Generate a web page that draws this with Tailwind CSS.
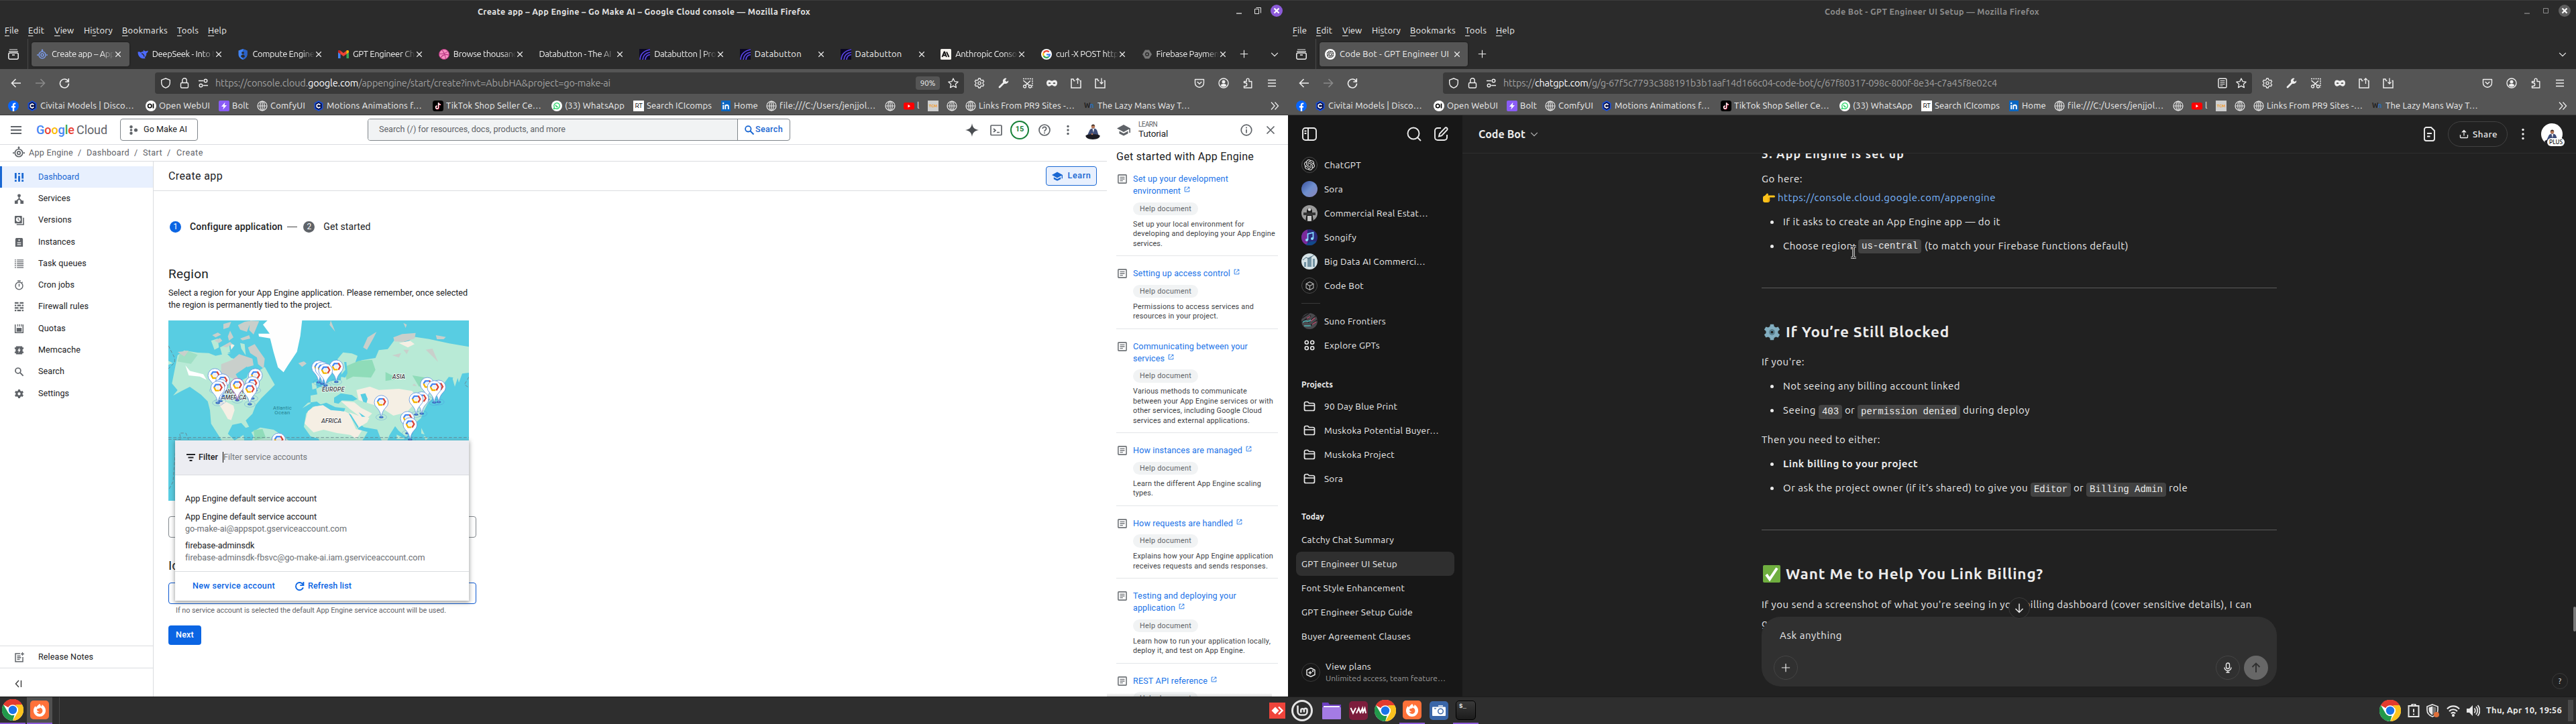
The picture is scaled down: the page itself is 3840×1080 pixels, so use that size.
<!DOCTYPE html>
<html lang="en">
<head>
<meta charset="utf-8">
<title>Desktop</title>
<script src="https://cdn.jsdelivr.net/npm/@tailwindcss/browser@4"></script>
</head>
<body class="w-[3840px] h-[1080px] overflow-hidden bg-[#2e2e2e] font-['Ubuntu','Open_Sans','Noto_Sans',sans-serif]">

<svg class="hidden">
  <defs>
    <symbol id="x" viewBox="0 0 16 16"><path d="M3 3l10 10M13 3L3 13" stroke="currentColor" stroke-width="1.6" fill="none"/></symbol>
    <symbol id="plus" viewBox="0 0 16 16"><path d="M8 1v14M1 8h14" stroke="currentColor" stroke-width="1.4" fill="none"/></symbol>
    <symbol id="chev" viewBox="0 0 16 16"><path d="M2.5 5.500l5.500 5.500 5.500-5.500" stroke="currentColor" stroke-width="1.4" fill="none"/></symbol>
    <symbol id="hist" viewBox="0 0 16 16"><path d="M2 1h12M1 3.800h14" stroke="currentColor" stroke-width="1.200"/><rect x=".8" y="6" width="14.400" height="9.300" rx="2" fill="none" stroke="currentColor" stroke-width="1.500"/><path d="M6 9h4" stroke="currentColor" stroke-width="1.500"/></symbol>
    <symbol id="back" viewBox="0 0 16 16"><path d="M15 8H1.500M7.500 2L1.500 8l6 6" stroke="currentColor" stroke-width="1.600" fill="none"/></symbol>
    <symbol id="fwd" viewBox="0 0 16 16"><path d="M1 8h13.500M8.500 2l6 6-6 6" stroke="currentColor" stroke-width="1.600" fill="none"/></symbol>
    <symbol id="reload" viewBox="0 0 16 16"><path d="M13.500 5A6.500 6.500 0 1 0 14.500 8.500M14.300 1v5H9.300" stroke="currentColor" stroke-width="1.600" fill="none"/></symbol>
    <symbol id="shield" viewBox="0 0 16 16"><path d="M8 1l6.300 2.400v4c0 4-3 6.500-6.300 7.800C4.700 13.900 1.700 11.400 1.700 7.400v-4z" stroke="currentColor" stroke-width="1.400" fill="none" stroke-linejoin="round"/></symbol>
    <symbol id="lock" viewBox="0 0 16 16"><rect x="2.500" y="7.500" width="11" height="7.500" rx="1.500" fill="none" stroke="currentColor" stroke-width="1.400"/><path d="M4.800 7.500V4a3.200 3.200 0 0 1 6.400 0v3.500" fill="none" stroke="currentColor" stroke-width="1.400"/></symbol>
    <symbol id="perm" viewBox="0 0 16 16"><path d="M1 4.500h7M15 11.500H8" stroke="currentColor" stroke-width="1.500"/><circle cx="11.500" cy="4.500" r="2.300" fill="none" stroke="currentColor" stroke-width="1.400"/><circle cx="4.500" cy="11.500" r="2.300" fill="none" stroke="currentColor" stroke-width="1.400"/></symbol>
    <symbol id="star" viewBox="0 0 16 16"><path d="M8 1l2.100 4.600 5 .6-3.700 3.400 1 5L8 12.100l-4.400 2.500 1-5L.9 6.200l5-.6z" fill="none" stroke="currentColor" stroke-width="1.300" stroke-linejoin="round"/></symbol>
    <symbol id="reader" viewBox="0 0 16 16"><rect x="2" y="1.200" width="12" height="13.600" rx="1.500" fill="none" stroke="currentColor" stroke-width="1.400"/><path d="M4.500 4.500h7M4.500 7h7M4.500 9.500h7M4.500 12h4" stroke="currentColor" stroke-width="1.200"/></symbol>
    <symbol id="gear" viewBox="0 0 16 16"><path d="M6.700 1h2.600l.5 2 1.600.9 2-.6 1.300 2.300-1.500 1.500v1.800l1.500 1.500-1.300 2.300-2-.6-1.600.9-.5 2H6.700l-.5-2-1.600-.9-2 .6L1.300 10.400l1.500-1.500V7.100L1.300 5.600l1.300-2.300 2 .6L6.200 3z" fill="none" stroke="currentColor" stroke-width="1.300" stroke-linejoin="round"/><circle cx="8" cy="8" r="2.100" fill="none" stroke="currentColor" stroke-width="1.300"/></symbol>
    <symbol id="wrench" viewBox="0 0 16 16"><path d="M2 14L9.500 6.500" stroke="currentColor" stroke-width="2.800" stroke-linecap="round"/><path d="M12.500.9A4.200 4.200 0 1 0 15.200 4.200L12.600 6 10.300 4z" fill="currentColor"/></symbol>
    <symbol id="snip" viewBox="0 0 16 16"><path d="M1 1.500h14v13" stroke="currentColor" stroke-width="1.500" fill="none" stroke-dasharray="2 1.300"/><path d="M1.500 4l9 7.500M12 4.500L4.500 11.500" stroke="currentColor" stroke-width="1.500"/><circle cx="3.500" cy="13" r="2" fill="none" stroke="currentColor" stroke-width="1.300"/><circle cx="11.500" cy="13" r="2" fill="none" stroke="currentColor" stroke-width="1.300"/></symbol>
    <symbol id="mask" viewBox="0 0 16 16"><path fill-rule="evenodd" fill="currentColor" d="M4 3.500c2 0 2.500 1.300 4 1.300s2-1.300 4-1.300c3 0 4 2 4 4.300 0 2.700-1.500 5-3.500 5S9.500 11 8 11s-2.500 1.800-4.500 1.800S0 10.500 0 7.800C0 5.500 1 3.500 4 3.500zM2.500 8.200C4 9.500 5.500 9.300 6.500 8.500 5.500 6.700 3.500 6.500 2.500 8.200zm7 .3c1 .8 2.500 1 4-.3-1-1.700-3-1.500-4 .3z"/></symbol>
    <symbol id="fup" viewBox="0 0 16 16"><path d="M6.500 4.500H5L4 2H1v13h14V4.500h-1.500" fill="none" stroke="currentColor" stroke-width="1.500"/><path d="M10.500 9V.8M8 3.500L10.500 1 13 3.500" fill="none" stroke="currentColor" stroke-width="1.300"/></symbol>
    <symbol id="fdn" viewBox="0 0 16 16"><path d="M6.500 4.500H5L4 2H1v13h14V4.500h-1.500" fill="none" stroke="currentColor" stroke-width="1.500"/><path d="M10 .5V9M7.500 6.500L10 9l2.500-2.500" fill="none" stroke="currentColor" stroke-width="1.300"/></symbol>
    <symbol id="pocket" viewBox="0 0 16 16"><path d="M1.500 2.500h13v5.200a6.500 6.500 0 0 1-13 0z" fill="none" stroke="currentColor" stroke-width="1.400" stroke-linejoin="round"/><path d="M4.800 6L8 9.200 11.200 6" fill="none" stroke="currentColor" stroke-width="1.500"/></symbol>
    <symbol id="acct" viewBox="0 0 16 16"><circle cx="8" cy="8" r="7" fill="none" stroke="currentColor" stroke-width="1.400"/><circle cx="8" cy="6" r="2.500" fill="currentColor"/><path d="M3.800 11.800c0-2 1.500-2.800 4.200-2.800s4.200.8 4.200 2.800C11 13.200 9.500 13.600 8 13.600s-3-.4-4.200-1.800z" fill="currentColor"/></symbol>
    <symbol id="ext" viewBox="0 0 16 16"><path d="M2.500 7.500V5.500H6.200V3a1.900 1.900 0 0 1 3.800 0v2.500h3.800V15H2.500v-2.500h1.700a2 2 0 0 0 0-5z" fill="none" stroke="currentColor" stroke-width="1.400" stroke-linejoin="round"/></symbol>
    <symbol id="menu" viewBox="0 0 16 16"><path d="M2 3.500h12M2 8h12M2 12.500h12" stroke="currentColor" stroke-width="1.400"/></symbol>
    <symbol id="globe" viewBox="0 0 16 16"><g fill="none" stroke="#e8e8e8" stroke-width="1.200"><circle cx="8" cy="8" r="7"/><ellipse cx="8" cy="8" rx="3.200" ry="7"/><path d="M1 8h14M8 1v14"/></g></symbol>
    <symbol id="fb" viewBox="0 0 16 16"><circle cx="8" cy="8" r="8" fill="#0866ff"/><path d="M6.800 16V10.500H4.900V8.200h1.900V7c0-2.500 1.200-3.500 3.200-3.500.6 0 1 0 1.300.1v2h-1c-.9 0-1.100.5-1.100 1.200v1.400h2l-.3 2.300H9.200V16z" fill="#fff"/></symbol>
    <symbol id="civ" viewBox="0 0 16 16"><path d="M8 0l6.500 3.800v8.400L8 16l-6.500-3.800V3.800z" fill="#1b4fd8"/><path d="M8 2l4.800 2.800v6.400L8 14l-4.800-2.800V4.800z" fill="#06104a"/><path d="M10.500 6.500L8 5 5.300 6.500v3L8 11l2.500-1.500" fill="none" stroke="#fff" stroke-width="1.700"/></symbol>
    <symbol id="oi" viewBox="0 0 16 16"><circle cx="8" cy="8" r="8" fill="#fff"/><circle cx="6.200" cy="8" r="2.700" fill="none" stroke="#000" stroke-width="1.600"/><path d="M11.500 4.500v7" stroke="#000" stroke-width="1.700"/></symbol>
    <symbol id="bolt" viewBox="0 0 16 16"><rect width="16" height="16" rx="2" fill="#8a5cf6"/><path d="M9.500 2.500L4 9h3.300l-1 4.500L12 7H8.700z" fill="#fff"/></symbol>
    <symbol id="tik" viewBox="0 0 16 16"><rect width="16" height="16" rx="3.500" fill="#000"/><path d="M8.500 3v7a2 2 0 1 1-2-2M8.500 3c.2 1.800 1.400 2.900 3.200 3" fill="none" stroke="#fe2c55" stroke-width="1.700" transform="translate(.5 .4)"/><path d="M8.500 3v7a2 2 0 1 1-2-2M8.500 3c.2 1.800 1.400 2.900 3.200 3" fill="none" stroke="#fff" stroke-width="1.400"/></symbol>
    <symbol id="wa" viewBox="0 0 16 16"><circle cx="8" cy="8" r="8" fill="#fff"/><path d="M3.500 12.500l.8-2.500A4.300 4.300 0 1 1 6 11.700z" fill="none" stroke="#25d366" stroke-width="1.300"/><path d="M6.300 6.300c.2 1.700 1.500 3 3.300 3.400" stroke="#25d366" stroke-width="1.400" fill="none"/></symbol>
    <symbol id="li" viewBox="0 0 16 16"><rect x="1" width="14" height="16" fill="#0a66c2"/><path d="M4.200 6.500V13M7.300 13V6.500M7.300 9c0-3 4.500-3 4.500 0v4" stroke="#fff" stroke-width="1.900" fill="none"/><circle cx="4.200" cy="3.900" r="1.200" fill="#fff"/></symbol>
    <symbol id="yt" viewBox="0 0 16 16"><rect y="3" width="16" height="10.500" rx="2.500" fill="#f00"/><path d="M6.500 6v4.400L10 8.200z" fill="#fff"/></symbol>
    <symbol id="gae" viewBox="0 0 16 16"><g fill="none" stroke="currentColor" stroke-width="1.500"><circle cx="8" cy="9" r="5"/><circle cx="8" cy="9" r="2"/><path d="M8 4V1M0 9h2.200M13.800 9H16"/></g><path d="M6.300 2.500h3.400L8 0z" fill="currentColor"/></symbol>
    <symbol id="deep" viewBox="0 0 16 16"><path d="M.5 4.500C2 4 3.500 4 5 5.500 6 4 7.500 3.500 8.700 4.300 8.300 3 9 2 9.700 1.600c.3 1.700 1.700 2 3 1.800L15.800 2.500c-.2 2-1 3.300-2.500 3.800.2 2.700-.8 5-2.600 6.200l1 1.500C6 15.500.5 12 .5 4.500z" fill="#4d6bfe"/><path d="M6 7c2 .2 3.500 2 4 4.500" stroke="#2b2b2b" stroke-width="1.300" fill="none"/></symbol>
    <symbol id="gshield" viewBox="0 0 16 16"><path d="M8 0l6.500 2.500V8c0 4-3 6.800-6.500 8C4.500 14.800 1.500 12 1.500 8V2.500z" fill="#4285f4"/><path d="M8 0l6.500 2.500V8c0 4-3 6.800-6.500 8z" fill="#2a62c9"/><circle cx="8" cy="5.800" r="1.900" fill="#2b2b2b"/><path d="M5 11.500c0-4 6-4 6 0L8 13.500z" fill="#2b2b2b"/></symbol>
    <symbol id="gmail" viewBox="0 0 16 16"><path d="M0 3.500V14h3.500V7z" fill="#4285f4"/><path d="M16 3.500V14h-3.500V7z" fill="#34a853"/><path d="M0 3.500C0 2 2 1.500 3 2.300L8 6l5-3.700c1-.8 3-.3 3 1.200L16 5 8 11 0 5z" fill="#ea4335"/><path d="M12.500 2.600l.5-.3c1-.8 3-.3 3 1.200V5l-3.500 2.600z" fill="#fbbc04"/><path d="M0 5V3.500C0 2 2 1.500 3 2.300l.5.4v4.900z" fill="#c5221f"/></symbol>
    <symbol id="drib" viewBox="0 0 16 16"><circle cx="8" cy="8" r="7.500" fill="#f48fc0" stroke="#b83280" stroke-width="1"/><path d="M5 1.500c3 3.500 4.500 8 5.500 13M1 7.500c6 0 10-1 12.500-4M3 13.500C5.500 8.500 10 7.500 15 9" fill="none" stroke="#b83280" stroke-width="1.100"/></symbol>
    <symbol id="db" viewBox="0 0 16 16"><rect width="16" height="16" fill="#0b0824"/><path d="M1 16C1.500 8 7 2.500 16 1M5 16c.5-6 4.500-10 11-11M9 16c.3-4 3-7 7-7.500" fill="none" stroke="#5b46e8" stroke-width="1.700"/></symbol>
    <symbol id="anth" viewBox="0 0 16 16"><rect width="16" height="16" rx="1.500" fill="#f5f3ee"/><path d="M2.500 12L5.500 4.500h.6L9 12M3.700 9.500h4M9 4.500L12.500 12" fill="none" stroke="#111" stroke-width="1.800"/></symbol>
    <symbol id="goog" viewBox="0 0 16 16"><circle cx="8" cy="8" r="8" fill="#fff"/><g fill="none" stroke-width="2.300"><path d="M11.700 4.600A4.900 4.900 0 0 0 3.700 5.700" stroke="#ea4335"/><path d="M3.700 5.700a4.900 4.900 0 0 0 0 4.700" stroke="#fbbc05"/><path d="M3.700 10.400a4.900 4.900 0 0 0 7.600 1.300" stroke="#34a853"/><path d="M11.300 11.700C12.300 10.800 12.900 9.500 12.900 8.300H8" stroke="#4285f4"/></g></symbol>
    <symbol id="hexg" viewBox="0 0 16 16"><path d="M5 1.500h6L15 8l-4 6.500H5L1 8z" fill="#777"/><circle cx="8" cy="8" r="3" fill="#2b2b2b"/><circle cx="8" cy="8" r="1.600" fill="#777"/></symbol>
    <symbol id="oai" viewBox="0 0 24 24"><path fill="currentColor" d="M22.2819 9.8211a5.9847 5.9847 0 0 0-.5157-4.9108 6.0462 6.0462 0 0 0-6.5098-2.9A6.0651 6.0651 0 0 0 4.9807 4.1818a5.9847 5.9847 0 0 0-3.9977 2.9 6.0462 6.0462 0 0 0 .7427 7.0966 5.98 5.98 0 0 0 .511 4.9107 6.051 6.051 0 0 0 6.5146 2.9001A5.9847 5.9847 0 0 0 13.2599 24a6.0557 6.0557 0 0 0 5.7718-4.2058 5.9894 5.9894 0 0 0 3.9977-2.9001 6.0557 6.0557 0 0 0-.7475-7.0729zm-9.022 12.6081a4.4755 4.4755 0 0 1-2.8764-1.0408l.1419-.0804 4.7783-2.7582a.7948.7948 0 0 0 .3927-.6813v-6.7369l2.02 1.1686a.071.071 0 0 1 .038.052v5.5826a4.504 4.504 0 0 1-4.4945 4.4944zm-9.6607-4.1254a4.4708 4.4708 0 0 1-.5346-3.0137l.142.0852 4.783 2.7582a.7712.7712 0 0 0 .7806 0l5.8428-3.3685v2.3324a.0804.0804 0 0 1-.0332.0615L9.74 19.9502a4.4992 4.4992 0 0 1-6.1408-1.6464zM2.3408 7.8956a4.485 4.485 0 0 1 2.3655-1.9728V11.6a.7664.7664 0 0 0 .3879.6765l5.8144 3.3543-2.0201 1.1685a.0757.0757 0 0 1-.071 0l-4.8303-2.7865A4.504 4.504 0 0 1 2.3408 7.872zm16.5963 3.8558L13.1038 8.364 15.1192 7.2a.0757.0757 0 0 1 .071 0l4.8303 2.7913a4.4944 4.4944 0 0 1-.6765 8.1042v-5.6772a.79.79 0 0 0-.407-.667zm2.0107-3.0231l-.142-.0852-4.7735-2.7818a.7759.7759 0 0 0-.7854 0L9.409 9.2297V6.8974a.0662.0662 0 0 1 .0284-.0615l4.8303-2.7866a4.4992 4.4992 0 0 1 6.6802 4.66zM8.3065 12.863l-2.02-1.1638a.0804.0804 0 0 1-.038-.0567V6.0742a4.4992 4.4992 0 0 1 7.3757-3.4537l-.142.0805L8.704 5.459a.7948.7948 0 0 0-.3927.6813zm1.0976-2.3654l2.602-1.4998 2.6069 1.4998v2.9994l-2.5974 1.4997-2.6067-1.4997Z"/></symbol>
    <symbol id="oaitab" viewBox="0 0 16 16"><circle cx="8" cy="8" r="8" fill="#fff"/><use href="#oai" x="2.500" y="2.500" width="11" height="11" color="#000"/></symbol>
    <!-- console navigation -->
    <symbol id="n-dash" viewBox="0 0 16 16"><g fill="currentColor"><path d="M1 1h3v9H1zM1 12h3v3H1zM6.500 1h3v2.500h-3zM6.500 5.500h3V15h-3zM12 1h3v9h-3zM12 12h3v3h-3z"/></g></symbol>
    <symbol id="n-serv" viewBox="0 0 16 16"><g fill="currentColor"><circle cx="8" cy="3" r="2.600"/><path d="M1 11h5v5H1zM10 11h5v5h-5z"/></g><path d="M8 4v4L3.500 12M8 8l4.500 4" stroke="currentColor" stroke-width="1.800" fill="none"/></symbol>
    <symbol id="n-vers" viewBox="0 0 16 16"><rect x="1" y="1" width="11.500" height="12" rx="1" fill="currentColor"/><path d="M4 15h11V4" stroke="currentColor" stroke-width="1.700" fill="none"/><circle cx="6.700" cy="7" r="3.700" fill="#fff"/><path d="M6.500 4.500V7l2 1.700" stroke="currentColor" stroke-width="1.200" fill="none"/></symbol>
    <symbol id="n-inst" viewBox="0 0 16 16"><path fill-rule="evenodd" fill="currentColor" d="M3 1h10l1 2v12H2V3zM7 3.500v2h2v-2zM5 8v1.300h6V8zm0 3v1.300h6V11z"/></symbol>
    <symbol id="n-task" viewBox="0 0 16 16"><path d="M1 2h2M4.500 2H15M1 5h2M4.500 5H15M1 8h2M4.500 8H15M1 11h2M4.500 11H15M1 14h2M4.500 14H15" stroke="currentColor" stroke-width="1.400"/></symbol>
    <symbol id="n-cron" viewBox="0 0 16 16"><circle cx="8" cy="9" r="5.800" fill="none" stroke="currentColor" stroke-width="1.500"/><path d="M5.500 1h5M8 5.500V10M12 4l1.500-1" stroke="currentColor" stroke-width="1.500"/></symbol>
    <symbol id="n-fire" viewBox="0 0 16 16"><path d="M1 2h6M9 2h6M1 6h2.500M5 6h6M12.500 6H15M1 10h6M9 10h6M1 14h2.500M5 14h6M12.500 14H15" stroke="currentColor" stroke-width="2.400"/></symbol>
    <symbol id="n-quot" viewBox="0 0 16 16"><path d="M1.800 1v13.200h12.400V1M5 1.500h1.500M8 1.500h1.500M11 1.500h1.500M5 3.500h1.500M8 3.500h1.500M11 3.500h1.500" stroke="currentColor" stroke-width="1.600" fill="none"/><path d="M4 6.500h8v6H4z" fill="currentColor"/></symbol>
    <symbol id="n-mem" viewBox="0 0 16 16"><path d="M3 1.500h10v2h2v2.500h-1.500v4H15v2.500h-2v2H3v-2H1V10h1.500V6H1V3.500h2z" fill="currentColor"/><path d="M9 3.500L5.500 8.800h2l-.6 3.700L10.500 7h-2z" fill="#fff"/></symbol>
    <symbol id="n-find" viewBox="0 0 16 16"><circle cx="6.300" cy="6.300" r="4.200" fill="none" stroke="currentColor" stroke-width="1.800"/><path d="M9.500 9.500L14.500 14.500" stroke="currentColor" stroke-width="2"/></symbol>
    <symbol id="n-set" viewBox="0 0 16 16"><path fill-rule="evenodd" fill="currentColor" d="M6.500 1h3l.4 2 1.500.9 2-.7 1.500 2.600-1.600 1.300v1.800l1.600 1.300-1.500 2.600-2-.7-1.500.9-.4 2h-3l-.4-2-1.500-.9-2 .7L1.100 10.200l1.600-1.300V7.100L1.100 5.800l1.500-2.600 2 .7L6.100 3zM8 5.700a2.300 2.300 0 1 0 0 4.600 2.300 2.300 0 0 0 0-4.600z"/></symbol>
    <symbol id="n-rel" viewBox="0 0 16 16"><path d="M9 3H2v12h11V8" fill="none" stroke="currentColor" stroke-width="1.500"/><path d="M4.500 6.500h5M4.500 9h6M4.500 11.500h4M12.500 1v5M10 3.500h5" stroke="currentColor" stroke-width="1.300"/></symbol>
    <symbol id="doc" viewBox="0 0 16 16"><rect x="1" y="1" width="14" height="14" rx="1" fill="none" stroke="currentColor" stroke-width="1.800"/><path d="M4 5h8M4 8h8M4 11h5" stroke="currentColor" stroke-width="1.600"/></symbol>
    <symbol id="pop" viewBox="0 0 12 12"><path d="M5 1.500H1.500v9h9V7M7 1.500h3.500V5M10.500 1.500L4.500 7.500" fill="none" stroke="currentColor" stroke-width="1.200"/></symbol>
    <symbol id="folder" viewBox="0 0 20 20"><path d="M2.500 5.500a2 2 0 0 1 2-2h3l2 2h6a2 2 0 0 1 2 2v7a2 2 0 0 1-2 2h-11a2 2 0 0 1-2-2zM2.500 9h15" fill="none" stroke="currentColor" stroke-width="1.700"/></symbol>
    <!-- taskbar -->
    <symbol id="chrome" viewBox="0 0 32 32"><circle cx="16" cy="16" r="16" fill="#fff"/><path d="M16 16L2.100 8A16 16 0 0 1 29.900 8z" fill="#e33b2e"/><path d="M16 0a16 16 0 0 1 13.900 8H16a8 8 0 0 0-6.900 4L2.100 8A16 16 0 0 1 16 0z" fill="#e33b2e"/><path d="M29.900 8A16 16 0 0 1 16 32l6.900-12a8 8 0 0 0 0-8L20 8z" fill="#fcc31e"/><path d="M2.100 8l7 12a8 8 0 0 0 9.500 3.500L16 32A16 16 0 0 1 2.100 8z" fill="#22994a"/><circle cx="16" cy="16" r="7.800" fill="#fff"/><circle cx="16" cy="16" r="6.200" fill="#1a73e8"/></symbol>
    <symbol id="ffox" viewBox="0 0 28 28"><rect width="28" height="28" rx="5" fill="#ff7139"/><path d="M14 5c1.500 1.500 2 3 2 4 1-.5 1.500-1.500 1.500-3C21.500 8.500 23.500 12 23 16c-.7 4.500-4.500 8-9 8s-8.500-3.500-9-8c-.3-3 .7-6 3-8 0 1 .3 1.700 1 2.200C10 8 12 7 14 5z" fill="#fff"/><path d="M10 13c2-1.500 4-.5 5-2.500 2.500 1 4 3 3.300 6-.7 2.500-3 3.700-5.200 3.300-2-.4-3.300-1.800-3.600-3.500 1 1 2.500 1.200 4 .2-2 0-3.500-1.500-3.500-3.500z" fill="#ff7139"/></symbol>
    <symbol id="face" viewBox="0 0 24 24"><circle cx="12.500" cy="5" r="2.700" fill="#b97a5a"/><path d="M9.800 4.500c0-4 5.500-4 5.500 0l-1-1h-3z" fill="#3a2a22"/><path d="M7 11c1-3 3-3.500 5.500-3.500S17.500 8 18.500 11l2 6.500-8 3-9-2z" fill="#3e4d78"/><path d="M11.500 8h2.500l-1 6z" fill="#fff"/><path d="M1.500 18c3-2.500 18-2.500 21 0 1 3-4 6-10.500 6S.5 21 1.500 18z" fill="#1b1b22"/><circle cx="11" cy="16" r="1.300" fill="#b97a5a"/></symbol>
    <!-- location marker, tip at 0,0 -->
    <symbol id="pin" viewBox="-40 -120 80 140" overflow="visible"><ellipse cx="0" cy="-4" rx="24" ry="13" fill="none" stroke="#4d8ad6" stroke-width="1.500" opacity=".7"/><ellipse cx="0" cy="-4" rx="10" ry="5" fill="#3c6fc0"/><path d="M0-2C-4-25-7-32-20-47a31 31 0 1 1 40 0C7-32 4-25 0-2z" fill="#fff" stroke="currentColor" stroke-width="2.500"/><path d="M-9-86L-17-73" stroke="#4285f4" stroke-width="7"/><path d="M-11-86H9" stroke="#4285f4" stroke-width="7"/><path d="M9-88L18-73 9-58" stroke="#db4437" stroke-width="7" fill="none"/><path d="M-17-74L-9-59H6" stroke="#f4b400" stroke-width="7" fill="none"/><circle cx="0" cy="-73" r="9" fill="#f1f1f1"/></symbol>
  </defs>
</svg>

<div class="flex flex-col w-[3840px] h-[1080px]">
  <div class="flex h-[1039px]">

    <!-- ============ Left browser window ============ -->
    <section class="w-[1920px] h-[1039px] flex flex-col overflow-hidden bg-white">
      <div data-chrome="left" class="shrink-0"></div>

      <div class="font-[Roboto] flex flex-col flex-1 min-h-0 text-[#202124]">
        <header class="h-[44px] shrink-0 border-b border-[#dadce0] flex items-center text-[#5f6368]">
          <svg class="w-4 h-4 ml-4"><path d="M0 3h16M0 8h16M0 13h16" stroke="#5f6368" stroke-width="2"/></svg>
          <div class="ml-[22px] w-[106px] flex items-baseline text-[18px] leading-none whitespace-nowrap">
            <span class="w-[60px]"><span data-w="57" class="inline-block font-medium"><span class="text-[#4285f4]">G</span><span class="text-[#ea4335]">o</span><span class="text-[#fbbc04]">o</span><span class="text-[#4285f4]">g</span><span class="text-[#34a853]">l</span><span class="text-[#ea4335]">e</span></span></span><span data-w="46">Cloud</span>
          </div>
          <div class="ml-[19px] w-[116px] h-[33px] rounded border border-[#80868b] flex items-center pl-3">
            <svg class="w-[14px] h-[14px]" viewBox="0 0 14 14" fill="#5f6368"><circle cx="3.500" cy="2.300" r="2.200"/><circle cx="3.500" cy="7" r="1.800"/><circle cx="3.500" cy="11.700" r="2.200"/><circle cx="10.500" cy="7" r="2.600"/></svg>
            <span data-w="65" class="ml-2 text-[12.6px] text-[#202124]">Go Make AI</span>
          </div>
          <div class="ml-[253px] w-[630px] h-[33px] rounded border border-[#80868b] flex overflow-hidden">
            <div class="w-[550px] bg-[#f1f3f4] flex items-center pl-4"><span data-w="278" class="text-[12.6px] text-[#5f6368]">Search (/) for resources, docs, products, and more</span></div>
            <div class="flex-1 border-l border-[#80868b] flex items-center pl-[9px] text-[#1a67d2]"><svg class="w-4 h-4"><use href="#n-find"/></svg><span data-w="41" class="ml-[1px] text-[12.6px] font-medium">Search</span></div>
          </div>
          <svg class="ml-[261px] w-5 h-5" viewBox="0 0 20 20"><path d="M10 0c.8 6 3.500 9 10 10-6.500 1-9.200 4-10 10-.8-6-3.500-9-10-10C6.500 9 9.200 6 10 0z" fill="#4a4d51"/></svg>
          <svg class="ml-4 w-5 h-5" viewBox="0 0 20 20" fill="none" stroke="#5f6368" stroke-width="1.700"><rect x="2" y="3" width="16" height="14.500" rx="1"/><path d="M6 8l3 2.500L6 13M11 13.500h4"/></svg>
          <div class="ml-[11px] w-7 h-7 rounded-full border-2 border-[#188038] text-[#188038] text-[11px] font-bold flex items-center justify-center">15</div>
          <svg class="ml-[13px] w-5 h-5" viewBox="0 0 20 20" fill="none" stroke="#5f6368" stroke-width="1.700"><circle cx="10" cy="10" r="8"/><path d="M7.300 8c0-3.700 5.400-3.400 5.400 0 0 2-2.700 2-2.700 4.200M10 13.500v1.700"/></svg>
          <svg class="ml-[15px] w-5 h-5" viewBox="0 0 20 20" fill="#5f6368"><circle cx="10" cy="4.500" r="1.700"/><circle cx="10" cy="10" r="1.700"/><circle cx="10" cy="15.500" r="1.700"/></svg>
          <svg class="ml-[15px] w-6 h-6 mt-1"><use href="#face"/></svg>
          <svg class="ml-6 w-5 h-5" viewBox="0 0 20 20" fill="#5f6368"><path d="M10 2L0 7.500 10 13l8.300-4.600V14H20V7.500z"/><path d="M3.500 11.500v3.700L10 18.500l6.500-3.300v-3.700L10 15z"/></svg>
          <div class="ml-3 w-[44px] flex flex-col whitespace-nowrap"><span data-w="28" class="text-[10px] leading-[12px] self-start">LEARN</span><span data-w="44" class="text-[13.500px] leading-[15px] text-[#202124] self-start">Tutorial</span></div>
          <svg class="ml-[107px] w-5 h-5" viewBox="0 0 20 20" fill="none" stroke="#5f6368" stroke-width="1.700"><circle cx="10" cy="10" r="7.800"/><path d="M10 9v5.500M10 5.500v2"/></svg>
          <svg class="ml-4 w-5 h-5" viewBox="0 0 20 20" fill="none" stroke="#5f6368" stroke-width="1.700"><path d="M4.500 4.500l11 11M15.500 4.500l-11 11"/></svg>
        </header>

        <div class="flex flex-1 min-h-0">
          <div class="w-[1650px] flex flex-col">
            <div class="h-[25px] shrink-0 border-b border-[#dadce0] flex items-center text-[12.6px] text-[#5f6368] whitespace-nowrap">
              <svg class="w-[18px] h-[18px] ml-[19px] mb-0.5"><use href="#gae"/></svg>
              <span class="ml-[6px] w-[73px]"><span data-w="66">App Engine</span></span><span class="w-[13px]">/</span>
              <span class="w-[71px]"><span data-w="64">Dashboard</span></span><span class="w-[13px]">/</span>
              <span class="w-[36px]"><span data-w="29">Start</span></span><span class="w-[14px]">/</span>
              <span data-w="40">Create</span>
            </div>
            <div class="flex flex-1 min-h-0">
              <nav class="w-[229px] border-r border-[#dadce0] flex flex-col pt-[7px]">
                <div id="nav"></div>
                <div class="mt-auto h-[34px] shrink-0 border-y border-[#dadce0] flex items-center text-[12.6px]">
                  <svg class="w-4 h-4 ml-[21px] text-[#5f6368]"><use href="#n-rel"/></svg><span data-w="82" class="ml-5">Release Notes</span>
                </div>
                <div class="h-[42px] shrink-0 flex items-center pl-[22px]"><svg class="w-3 h-3 mt-1" fill="none" stroke="#444" stroke-width="1.500"><path d="M6 1L1.500 6 6 11M9.500 1v10"/></svg></div>
              </nav>
              <main class="flex-1 flex flex-col">
                <div class="h-[44px] shrink-0 border-b border-[#dadce0] flex items-center justify-between pl-[22px] pr-[15px]">
                  <span data-w="81" class="text-[16px]">Create app</span>
                  <div class="w-[76px] h-[29px] rounded border border-[#1967d2] bg-[#e8f0fe] text-[#1967d2] flex items-center justify-center gap-2 text-[12.6px] font-medium">
                    <svg class="w-4 h-4" viewBox="0 0 20 20" fill="currentColor"><path d="M10 2L0 7.500 10 13l8.300-4.600V14H20V7.500z"/><path d="M3.500 11.500v3.700L10 18.500l6.500-3.300v-3.700L10 15z"/></svg>
                    <span data-w="35">Learn</span>
                  </div>
                </div>
                <div class="pl-[22px] flex flex-col items-start">
                  <div class="mt-[44px] h-[18px] flex items-center text-[14px]">
                    <span class="ml-0.5 w-[17px] h-[17px] rounded-full bg-[#0b65e3] text-white text-[12px] flex items-center justify-center">1</span>
                    <span data-w="138" class="ml-[13px] font-medium">Configure application</span>
                    <span class="ml-[7px] w-[15px] h-px bg-[#444]"></span>
                    <span class="ml-[9px] w-[17px] h-[17px] rounded-full bg-[#5f6368] text-white text-[12px] flex items-center justify-center">2</span>
                    <span data-w="70" class="ml-[13px]">Get started</span>
                  </div>
                  <h2 class="mt-[50px] text-[19px] leading-6"><span data-w="60">Region</span></h2>
                  <p class="mt-[7px] text-[12.6px] leading-[18px]"><span data-w="446" class="block">Select a region for your App Engine application. Please remember, once selected</span><span data-w="244" class="block w-max">the region is permanently tied to the project.</span></p>

                  <div class="relative mt-[14px]">
                    <svg class="block w-[448px] h-[269px]" viewBox="9 9 1344 807">
                      <rect x="9" y="9" width="1344" height="807" fill="#58cde2"/>
                      <g fill="#b8ead6">
                        <path d="M50 165l30-22 60 10 50 2 30 12 50-10 20 20 35 10 20 30 25 30 40-10 30-20 25 45 20 35-20 20-40 40-25 30-15 40-30 30 15 28-15 5-20-22-40 8-20 40 30 30 40-25 5 40-30 10 20 25 25 15-15 5-45-25-45-25-25-40-35-55-5-60-10-40-30-30-50-35-40 20-35 20 20-25-25-30z"/>
                        <path d="M645 380v-35l30-5-5-25 40-20 25-15 45-3 5-50-20-45 25-30 40 5 25 10-10 30 30-10 60-10 15-35 40-5 30-40 60 10 25-25 70 10 90 20 90 15 78 10v90l-50-15-20 30-40 5-15 40-5-20-40-5-30 40-15 50-25-20-5 30-20 20-15 30-15 35-30 25-20-10 5 40-20 30-35-30-15-20-25 40-20 50-20-35-15-40-60-10-45-40-40-25-30 10-20-30-50-10-25-20-40 5-25 25z"/>
                        <path d="M615 485l10-60 30-30 60-12 25 20 60 15 25 10 35 70 40 10-30 50-45 50-35 45-65 10-15-70-30-55-35-10z"/>
                        <path d="M380 510l40-22 60 10 30 20 40 30-30 40-120 10-20-40 10-30z"/>
                        <path d="M200 100l30-10 5 40-20 10zM240 130l40-20 5 40-35 15zM330 110l20 5 5 50-20-30zM290 155l-30 8-15-8zM1280 270l20-40 5 30-15 45zM985 415l12 15-10 18zM1030 520l40 20h-40zM650 290l18-5 5 28-20 5zM9 190l20 10-20 8zM1140 490l15 30-15-5zM1150 525l20 10-10 10z"/>
                      </g>
                      <path d="M800 215l60-25 60-5 15 45-20 35-80-5-30 15zM390 500l40-5 15 40-50 10zM1100 255l60 10 30 30-60 10zM980 240l60 30-60 10z" fill="#8fdcb9"/>
                      <path d="M60 155l30-12 50 20-30 40-60-10zM230 270l60 10 90 20-20 40-80-10-50-20z" fill="#9fe0c5"/>
                      <g fill="#f5efe4">
                        <path d="M618 470l15-55 30-22 60-10 20 18 45 10 30 15 30 70 25 5-40 22-70-10-60-15-45 12z"/>
                        <path d="M818 420l40 15 50 10-10 20-40 25-12-20zM850 320l60-15 40 15 90-5 60 10 20 45-45 50-60 15-60-40-50-15-45-15zM780 370l60 5 30 25 50 25-20 20-40-10-40-30zM230 375l30-5 40 20 5 20-15 45-15-5-20-35zM815 515l60-15-25 40z"/>
                        <path d="M1040 110l50-10 20 15-30 15zM285 110l20 10-15 20z"/>
                      </g>
                      <g fill="#c9cfcb">
                        <path d="M245 205l50-20 30-25 60 20 5 30-35 10-30 60-50-20-30-15zM365 130l30-15 20 30 25 35-5 45-25-20-5-30-30-20zM205 75l25-12 15 10-25 12zM255 25l35-10-10 25-25 8zM275 80l10-25 15 30-20 15zM320 30l30-15 30-5-20 50-30-10zM375 10l40 2-25 60-20-20zM330 90l40-15 5 15-35 8zM215 100l20 10 15-10-10-12zM590 200l25-8 12 10-20 15zM250 125l20 5 25-15-10-10zM880 130l20-45 40-25-15 30-28 50zM1015 85l40-15 60-5-5 25-50 15-40-2zM1060 20l15 8-5 15zM1205 75l45 8-10 10h-30zM735 9l20 50-25-30zM1100 300l8-8 12 12zM1010 165l40-10-10 20zM1160 140l30-5 25 60-20-20zM1060 140l25 0-10 20zM50 150l50-5-20 25z"/>
                      </g>
                      <path d="M412 68l50 0-30-40 20-19h155l-8 70-15 70-40 60-20 32-25-22-20-70-15-60-50-8z" fill="#fefefe"/><path d="M85 210l20 25 60 15 15 25-30-15-50-5zM240 175l5 10" fill="#fff"/>
                      <path d="M750 355l30-20 50 8 25 18-20 8-50-2-15 15-20-5zM655 395l60-18 40 20 45 5-5 14-60-6-35-22zM815 425l10 5 35 55-5 5zM868 340l22-5 10 25-5 18-15-5zM310 250l50-35 10 20-10 30-20 10 5 25-15-15zM340 320l25 0 5 12-20 5zM775 260l25-30-5-35 10 0 5 50-10 20zM875 440l-15-20 30 20z" fill="#58cde2"/>
                      <g fill="none" stroke="#66808a" stroke-width="2.500" stroke-dasharray="14 8"><path d="M9 533H1353M9 122l28 55v20L9 225M1353 262l-20 34 20 14M9 541h55l-5-28h28l12 30M60 560l-20 40-10 130-21 40"/></g>
                      <g font-family="Roboto" font-style="italic" font-weight="500" font-size="27" fill="#3c4043" stroke="#fff" stroke-width="4" paint-order="stroke"><text x="1010" y="269" textLength="58">ASIA</text><text x="696" y="328" textLength="100">EUROPE</text><text x="693" y="467" textLength="90">AFRICA</text><text x="262" y="335" textLength="84">NORTH</text><text x="246" y="363" textLength="112">AMERICA</text></g>
                      <g font-family="Roboto" font-size="23" fill="#25808f"><text x="477" y="408" textLength="83">Atlantic</text><text x="484" y="430" textLength="69">Ocean</text></g>
                      <g id="pins"></g>
                    </svg>
                  </div>

                  <div class="mt-[23px] w-[459px] h-8 rounded border border-[#80868b]"></div>
                  <h2 class="mt-[30px] text-[19px] leading-6">Identity and API access</h2>
                  <div class="relative mt-[13px] w-[459px] h-8 rounded border-[1.500px] border-[#0b57d0]">
                    <div class="absolute left-[9px] top-[-213px] w-[438px] h-[239px] bg-white shadow-[0_2px_6px_1px_rgba(60,64,67,0.45)] text-[12.6px]">
                      <div class="h-[52px] bg-[#ecedf2] border-b border-[#dadce0] flex items-start pt-[17px] pl-[17px]">
                        <svg class="w-[13px] h-[16px]" viewBox="0 0 13 16" fill="none" stroke="#202124" stroke-width="2"><path d="M0 4h13M2.500 8.500h8M4.500 13h4"/></svg>
                        <span data-w="29" class="ml-[5px] font-medium leading-4">Filter</span>
                        <span class="ml-[7px] w-px h-4 bg-black"></span><span data-w="125" class="text-[#74787c] leading-4">Filter service accounts</span>
                      </div>
                      <div class="h-[144px] pl-[15px] pt-[26px] leading-[18px] border-b border-[#dadce0] flex flex-col items-start">
                        <span data-w="196">App Engine default service account</span>
                        <span data-w="196" class="mt-[9px]">App Engine default service account</span>
                        <span data-w="241" class="text-[#6d7175]">go-make-ai@appspot.gserviceaccount.com</span>
                        <span data-w="103" class="mt-[7px]">firebase-adminsdk</span>
                        <span data-w="357" class="text-[#6d7175]">firebase-adminsdk-fbsvc@go-make-ai.iam.gserviceaccount.com</span>
                      </div>
                      <div class="h-[43px] flex items-center pl-[26px] text-[#0b65e3] font-medium">
                        <span data-w="123">New service account</span>
                        <svg class="ml-[29px] w-[15px] h-[15px]" viewBox="0 0 16 16"><path d="M13.200 5A6 6 0 1 0 13.800 10M14.300 1v5.500H8.800" stroke="currentColor" stroke-width="2" fill="none"/></svg>
                        <span data-w="65" class="ml-[5px]">Refresh list</span>
                      </div>
                    </div>
                  </div>
                  <p class="mt-0.5 ml-[11px] text-[10.800px] leading-4 text-[#5f6368]"><span data-w="403">If no service account is selected the default App Engine service account will be used.</span></p>
                  <div class="mt-[14px] w-[49px] h-[29px] rounded bg-[#0b65e3] text-white text-[12.6px] font-medium flex items-center justify-center"><span data-w="27">Next</span></div>
                </div>
              </main>
            </div>
          </div>

          <aside class="w-[270px] pl-[14px] pr-[15px] overflow-hidden relative">
            <h3 class="pt-[6px] h-[25px] text-[16px] leading-6"><span data-w="205">Get started with App Engine</span></h3>
            <div id="docs"></div>
            <div class="absolute left-0 right-6 bottom-0 h-[5px] bg-gradient-to-b from-black/0 to-black/15"></div>
          </aside>
        </div>
      </div>
    </section>

    <!-- ============ Right browser window ============ -->
    <section class="w-[1920px] h-[1039px] flex flex-col overflow-hidden bg-[#212121]">
      <div data-chrome="right" class="shrink-0"></div>
      <div class="flex flex-1 min-h-0 text-[#ececec]">
        <aside class="w-[260px] bg-[#171717] flex flex-col">
          <div class="h-[56px] flex items-center">
            <svg class="ml-5 w-6 h-6" viewBox="0 0 24 24" fill="none" stroke="currentColor" stroke-width="1.900"><rect x="2" y="3" width="20" height="18" rx="4"/><path d="M10 3v18M4.500 7.500h3M4.500 11h3"/></svg>
            <svg class="ml-[132px] w-6 h-6" viewBox="0 0 24 24" fill="none" stroke="currentColor" stroke-width="1.900"><circle cx="11" cy="11" r="8.500"/><path d="M17 17l5 5"/></svg>
            <svg class="ml-4 w-6 h-6" viewBox="0 0 24 24" fill="none" stroke="currentColor" stroke-width="1.900"><path d="M12 3H7a4 4 0 0 0-4 4v10a4 4 0 0 0 4 4h10a4 4 0 0 0 4-4v-4"/><path d="M18.500 2.500a2.300 2.300 0 0 1 3 3L13 14.500l-4 1 1-4z"/></svg>
          </div>
          <div id="gpts"></div>
          <div class="mt-[8px] ml-5 w-7 h-px bg-[#3a3a3a]"></div>
          <div id="gpts2" class="mt-[8px]"></div>
          <div class="mt-[31px] h-[20px] leading-5 pl-5 text-[12px] font-bold"><span data-w="47">Projects</span></div>
          <div id="projects" class="mt-[4px]"></div>
          <div class="mt-[29px] h-[20px] leading-5 pl-5 text-[12px] font-bold"><span data-w="34">Today</span></div>
          <div id="chats" class="mt-[6px]"></div>
          <div class="mt-[18px] flex items-center h-[36px] pl-5">
            <svg class="w-7 h-7" viewBox="0 0 28 28" fill="none" stroke="#ececec" stroke-width="1.400"><circle cx="14" cy="14" r="13.500" stroke="#3a3a3a" stroke-width="1"/><path d="M14 7.500l6 3v7l-6 3-6-3v-7z"/><path d="M13 12v5M10.500 14.500h5M17 10.800v2.400M15.800 12h2.400"/></svg>
            <div class="ml-2 flex flex-col items-start"><span data-w="68" class="text-[13.500px] leading-[18px]">View plans</span><span data-w="179" class="text-[12px] leading-[18px] text-[#9b9b9b]">Unlimited access, team feature…</span></div>
          </div>
        </aside>

        <main class="flex-1 flex flex-col relative">
          <header class="h-[57px] shrink-0 border-b border-[#2e2e2e] flex items-center">
            <span data-w="70" class="ml-6 text-[16px] font-semibold">Code Bot</span>
            <svg class="ml-[6px] w-[14px] h-[14px] text-[#b4b4b4]"><use href="#chev" width="14" height="14"/></svg>
            <svg class="ml-auto w-6 h-6" viewBox="0 0 24 24" fill="none" stroke="currentColor" stroke-width="1.900"><path d="M5 5a3 3 0 0 1 3-3h7l5 5v12a3 3 0 0 1-3 3H8a3 3 0 0 1-3-3zM9 11h7M9 15.500h4.500"/></svg>
            <div class="ml-[16px] w-[89px] h-[38px] rounded-full border border-[#424242] flex items-center pl-4">
              <svg class="w-[14px] h-[14px]" viewBox="0 0 14 14" fill="none" stroke="currentColor" stroke-width="1.300"><path d="M7 9.500V1.500M4 4.500l3-3 3 3M1.500 8v3.500a1 1 0 0 0 1 1h9a1 1 0 0 0 1-1V8"/></svg>
              <span data-w="37" class="ml-[6px] text-[13.500px] font-medium">Share</span>
            </div>
            <svg class="ml-[13px] w-5 h-5" viewBox="0 0 20 20" fill="currentColor"><circle cx="10" cy="3.500" r="1.700"/><circle cx="10" cy="10" r="1.700"/><circle cx="10" cy="16.500" r="1.700"/></svg>
            <div class="ml-[17px] mr-5 relative w-8 h-8 rounded-full bg-white flex items-end justify-center">
              <svg class="w-6 h-6"><use href="#face"/></svg>
              <span class="absolute left-[9px] top-[22px] w-[26px] h-[12px] rounded-full bg-white text-[#111] text-[8.500px] font-medium leading-[12px] text-center">PLUS</span>
            </div>
          </header>

          <div class="flex-1 min-h-0 overflow-hidden relative">
            <div class="ml-[446px] w-[768px] text-[15px] leading-7 flex flex-col items-start whitespace-nowrap">
              <h3 class="mt-[-13px] h-7 text-[17.500px] font-bold"><span data-w="213">3. App Engine is set up</span></h3>
              <p class="mt-[9px] h-7"><span data-w="61">Go here:</span></p>
              <p class="h-7 flex items-center">
                <svg class="mr-[5px] ml-0.5 w-[18px] h-[14px]" viewBox="0 0 18 14" fill="#fcc21b"><rect x="0" y="4" width="10" height="10" rx="3"/><path d="M1 6l5-5.500c2 0 2.500 1.500 1.500 3H16.500a1.500 1.500 0 0 1 0 3H9z"/><path d="M7 8h4M7 10.500h4M7 12.500h3" stroke="#e59600" stroke-width=".8"/></svg>
                <span data-w="325" class="text-[#7ab7ff] ml-[-1px]">https://console.cloud.google.com/appengine</span></p>
              <p class="mt-2 h-7 flex items-center pl-[13px]"><i class="w-[5px] h-[5px] rounded-full bg-[#ececec] mr-[14px]"></i><span data-w="324">If it asks to create an App Engine app — do it</span></p>
              <p class="mt-2 h-7 flex items-center pl-[13px]"><i class="w-[5px] h-[5px] rounded-full bg-[#ececec] mr-[14px]"></i><span data-w="108">Choose region:</span><code class="ml-1 h-[21px] leading-[20px] rounded px-[5px] bg-[#424242] text-[14px] font-['Liberation_Mono']"><span data-w="84">us-central</span></code><span data-w="304" class="ml-[5px]">(to match your Firebase functions default)</span></p>
              <div class="mt-[48px] w-full h-px bg-[#5c5c5c]"></div>
              <h2 class="mt-[49px] h-8 flex items-center text-[22.500px] font-bold">
                <svg class="ml-0.5 mr-[7px] w-[27px] h-[27px]" viewBox="0 0 16 16" color="#82aec0"><use href="#n-set"/><circle cx="8" cy="8" r="1.700" fill="none" stroke="#5f8fa3" stroke-width=".9"/></svg><span data-w="244">If You’re Still Blocked</span></h2>
              <p class="mt-[15px] h-7"><span data-w="64">If you're:</span></p>
              <p class="mt-2 h-7 flex items-center pl-[13px]"><i class="w-[5px] h-[5px] rounded-full bg-[#ececec] mr-[14px]"></i><span data-w="264">Not seeing any billing account linked</span></p>
              <p class="mt-2 h-7 flex items-center pl-[13px]"><i class="w-[5px] h-[5px] rounded-full bg-[#ececec] mr-[14px]"></i><span data-w="49">Seeing</span><code class="ml-1 mt-1 h-[21px] leading-[20px] rounded px-[5px] bg-[#424242] text-[14px] font-['Liberation_Mono']"><span data-w="25">403</span></code><span data-w="15" class="ml-[4px]">or</span><code class="ml-[4px] mt-1 h-[21px] leading-[20px] rounded px-[5px] bg-[#424242] text-[14px] font-['Liberation_Mono']"><span data-w="143">permission denied</span></code><span data-w="100" class="ml-1">during deploy</span></p>
              <p class="mt-4 h-7"><span data-w="177">Then you need to either:</span></p>
              <p class="mt-2 h-7 flex items-center pl-[13px]"><i class="w-[5px] h-[5px] rounded-full bg-[#ececec] mr-[14px]"></i><b data-w="201">Link billing to your project</b></p>
              <p class="mt-2 h-7 flex items-center pl-[13px]"><i class="w-[5px] h-[5px] rounded-full bg-[#ececec] mr-[14px]"></i><span data-w="365">Or ask the project owner (if it’s shared) to give you</span><code class="ml-1 mt-1 h-[21px] leading-[20px] rounded px-[5px] bg-[#424242] text-[14px] font-['Liberation_Mono']"><span data-w="50">Editor</span></code><span data-w="15" class="ml-1">or</span><code class="ml-1 mt-1 h-[21px] leading-[20px] rounded px-[5px] bg-[#424242] text-[14px] font-['Liberation_Mono']"><span data-w="109">Billing Admin</span></code><span data-w="28" class="ml-1">role</span></p>
              <div class="mt-[48px] w-full h-px bg-[#5c5c5c]"></div>
              <h2 class="mt-[49px] h-8 flex items-center text-[22.500px] font-bold">
                <svg class="ml-0.5 mr-[8px] w-[26px] h-[26px]" viewBox="0 0 26 26"><rect width="26" height="26" rx="2" fill="#6fae3f"/><path d="M5 14l5 7L21 4.500" fill="none" stroke="#fff" stroke-width="4"/></svg><span data-w="384">Want Me to Help You Link Billing?</span></h2>
              <p class="mt-4 h-7"><span data-w="731">If you send a screenshot of what you're seeing in your billing dashboard (cover sensitive details), I can</span></p>
              <p class="h-7">guide you</p>
            </div>

            <div class="absolute left-[446px] top-[691px] w-[768px] h-[104px] rounded-[28px] bg-[#303030] px-[18px] flex flex-col">
              <div class="pl-[9px] h-[56px] flex items-center text-[15px]"><span data-w="93">Ask anything</span></div>
              <div class="flex items-center h-[40px]">
                <div class="w-9 h-9 rounded-full border border-[#454545] flex items-center justify-center"><svg class="w-[14px] h-[14px]" viewBox="0 0 16 16"><use href="#plus"/></svg></div>
                <div class="ml-auto w-9 h-9 rounded-full border border-[#454545] flex items-center justify-center"><svg class="w-4 h-4" viewBox="0 0 16 16" fill="none" stroke="currentColor" stroke-width="1.400"><rect x="5.500" y="1" width="5" height="8.500" rx="2.500"/><path d="M3 7.500a5 5 0 0 0 10 0M8 12.500V15M5.500 15h5"/></svg></div>
                <div class="ml-[6px] mr-[-5px] w-9 h-9 rounded-full bg-[#676767] flex items-center justify-center"><svg class="w-4 h-4" viewBox="0 0 16 16" fill="none" stroke="#2f2f2f" stroke-width="1.900"><path d="M8 15V1.500M2.500 7L8 1.500 13.500 7"/></svg></div>
              </div>
            </div>
            <div class="absolute left-[814px] top-[662px] w-8 h-8 rounded-full bg-[#212121] border border-[#3a3a3a] flex items-center justify-center"><svg class="w-4 h-4" viewBox="0 0 16 16" fill="none" stroke="currentColor" stroke-width="1.500"><path d="M8 1.500v13M2.500 9L8 14.500 13.500 9"/></svg></div>
            <div class="absolute left-[1624px] top-[775px] w-6 h-6 rounded-full border border-[#3a3a3a] text-[11px] leading-[22px] text-center">?</div>
            <div class="absolute right-0 top-[676px] w-1 h-[37px] rounded bg-[#7a7a7a]"></div>
            <!-- text cursor -->
            <svg class="absolute left-[578px] top-[137px] w-[10px] h-[20px]" viewBox="0 0 10 20" fill="none"><path d="M1 1.500h2.500L5 3l1.500-1.500H9M5 3v14M1 18.500h2.500L5 17l1.500 1.500H9" stroke="#fff" stroke-width="3.200"/><path d="M1 1.500h2.500L5 3l1.500-1.500H9M5 3v14M1 18.500h2.500L5 17l1.500 1.500H9" stroke="#111" stroke-width="1.300"/></svg>
          </div>
        </main>
      </div>
    </section>
  </div>

  <!-- ============ Taskbar ============ -->
  <footer class="h-[41px] bg-[#2e2e2e] border-t border-[#1c1c1c] flex items-stretch text-[#e8e8e8]">
    <div class="w-[38px] border-b-2 border-[#8c5bd9] flex items-center justify-center"><svg class="w-8 h-8" viewBox="0 0 32 32"><use href="#chrome"/></svg></div>
    <div class="ml-0.5 w-[38px] border-b-2 border-[#8c5bd9] bg-[#505050] flex items-center justify-center"><svg class="w-7 h-7"><use href="#ffox"/></svg></div>
    <div class="ml-[10px] w-px bg-[#484848]"></div>
    <div class="ml-[1803px] w-6 flex items-center"><svg class="w-6 h-6" viewBox="0 0 24 24"><rect width="24" height="24" fill="#ef443b"/><path d="M9 6.500l5.500 5.500L9 17.500 3.500 12z" fill="#fff"/><path d="M14 6.500l5.500 5.500-5.500 5.500" stroke="#fff" stroke-width="2.400" fill="none"/></svg></div>
    <div class="ml-[9px] flex items-center"><svg class="w-8 h-8" viewBox="0 0 32 32" fill="none" stroke="#e4e4e4"><circle cx="16" cy="16" r="14.500" stroke-width="3"/><path d="M9.500 8.500v9a5 5 0 0 0 5 5h4.500a4.500 4.500 0 0 0 4.500-4.500v-3a2.300 2.300 0 0 0-4.600 0v3.500M18.900 15.500a2.300 2.300 0 0 0-4.600 0v3.500" stroke-width="2.600"/></svg></div>
    <div class="ml-[14px] flex items-center"><svg class="w-7 h-7" viewBox="0 0 28 28"><path d="M0 2h9l2 3h17v8H0z" fill="#6d3fc0"/><rect x="2" y="7" width="24" height="6" fill="#f3eefc"/><rect y="9" width="28" height="18" rx="1" fill="#a47be4"/></svg></div>
    <div class="ml-3 flex items-center"><svg class="w-7 h-7" viewBox="0 0 28 28"><rect width="28" height="28" rx="5" fill="#7c1d3c"/><path d="M2.500 10L6 18l4-8M11 18l3.500-7.500L17 18M16.500 18l3.500-7.500 1 7.500M20 18l3.500-7.500 1.500 7.500" stroke="#fff" stroke-width="2" fill="none"/></svg></div>
    <div class="ml-[10px] flex items-center"><svg class="w-8 h-8" viewBox="0 0 32 32"><use href="#chrome"/></svg></div>
    <div class="ml-[5px] w-[38px] border-b-2 border-[#8c5bd9] flex items-center justify-center"><svg class="w-7 h-7"><use href="#ffox"/></svg></div>
    <div class="ml-[7px] flex items-center"><svg class="w-7 h-7" viewBox="0 0 28 28"><rect width="28" height="28" rx="5" fill="#3a66a8"/><rect x="4" y="8.500" width="20" height="13.500" rx="1" fill="#fff"/><path d="M13 7h7" stroke="#fff" stroke-width="1.500"/><circle cx="16.500" cy="15" r="3.800" fill="none" stroke="#3a66a8" stroke-width="1.500"/><path d="M7 11h3" stroke="#3a66a8" stroke-width="1.300"/></svg></div>
    <div class="ml-[7px] w-[38px] border-b-2 border-[#8c5bd9] flex items-center justify-center"><div class="w-[30px] h-[29px] rounded-[5px] border border-black bg-gradient-to-b from-[#3a3a3a] to-[#1c1c1c] text-[9px] leading-3 pl-1 pt-0.5 font-['Liberation_Mono'] font-bold">$_</div></div>
    <div class="ml-auto flex items-center pr-1">
      <svg class="w-8 h-8" viewBox="0 0 32 32"><use href="#chrome"/></svg>
      <svg class="ml-[9px] w-5 h-5" viewBox="0 0 20 20" fill="none" stroke="#e8e8e8" stroke-width="2"><rect x="2.500" y="3" width="15" height="16"/><path d="M7 3a3 3 0 0 1 6 0M10 7.500v5M10 14.500v2"/></svg>
      <svg class="ml-2 w-5 h-5" viewBox="0 0 20 20"><path d="M10 1l8 3v5c0 5-4 8.500-8 10-4-1.500-8-5-8-10V4z" fill="none" stroke="#e8e8e8" stroke-width="1.700"/><path d="M10 3.500v13c-3-1.500-5.500-4-5.500-8V5.500z" fill="#e8e8e8"/><path d="M10 3.500v13c3-1.500 5.500-4 5.500-8V5.500z" fill="#777"/><circle cx="16" cy="16" r="4" fill="#e0703a"/></svg>
      <svg class="ml-[11px] w-5 h-5" viewBox="0 0 20 20" fill="none" stroke="#e8e8e8" stroke-width="2.200"><path d="M1 7.500c5-5.500 13-5.500 18 0M4 11c3.500-3.700 8.500-3.700 12 0M6.800 14.300c2-2 4.400-2 6.400 0"/><circle cx="10" cy="17.200" r="1" fill="#e8e8e8"/></svg>
      <svg class="ml-[10px] w-5 h-5" viewBox="0 0 20 20" fill="none" stroke="#e8e8e8" stroke-width="1.800"><path d="M0 7h4l5-5v16l-5-5H0z" fill="#e8e8e8" stroke="none"/><path d="M11.500 6.500c1.500 2 1.500 5 0 7M14 4c3 3.500 3 8.500 0 12M16.500 2c4 4.500 4 11.500 0 16"/></svg>
      <span data-w="113" class="ml-[9px] text-[13px] font-bold whitespace-nowrap">Thu, Apr 10, 19:56</span>
      <span class="ml-[9px] w-2 h-8 bg-[#484848]"></span>
    </div>
  </footer>
</div>

<script>
const icon = (id, cls) => `<svg class="${cls || 'w-4 h-4 shrink-0'}"><use href="#${id}"/></svg>`;
const px = n => `width:${n}px`;

/* ---------- window chrome shared by both browser windows ---------- */
const menus = [['File',21,35],['Edit',24,39],['View',29,44],['History',43,57],['Bookmarks',68,82],['Tools',32,46],['Help',28,40]];
const menuMark = {History: 2};
const bookmarks = [
  ['fb','',0,28],['civ','Civitai Models | Disco…',140,177],['oi','Open WebUI',76,109],['bolt','Bolt',25,57],
  ['globe','ComfyUI',52,84],['civ','Motions Animations f…',142,178],['tik','TikTok Shop Seller Ce…',142,177],
  ['wa','(33) WhatsApp',89,122],['rt','Search ICIcomps',97,130],['li','Home',36,68],
  ['globe','file:///C:/Users/jenjjol…',143,177],['globe','',0,28],['yt','l',3,36],['tcm','',0,28],['globe','',0,28],
  ['globe','Links From PR9 Sites -…',143,177],['wn','The Lazy Mans Way T…',138,170]];
const special = {
  rt: '<span class="w-4 h-4 shrink-0 bg-white text-black text-[10px] leading-4 text-center tracking-tighter">RT</span>',
  tcm: '<span class="w-4 h-4 shrink-0 bg-[#cfcfcf] text-[#f59a23] text-[6px] font-bold leading-4 text-center">TCM</span>',
  wn: '<span class="w-4 h-4 shrink-0 text-[#222] text-[10px] font-bold leading-4 font-[\'Liberation_Serif\'] tracking-tighter">W<span class="text-[#2a6fb5]">n</span></span>'
};
const winData = {
  left: {
    title: ['Create app – App Engine – Go Make AI – Google Cloud console — Mozilla Firefox', 496, 'text-[#e4e4e4]'],
    tabs: [['gae','Create app – App Engine'],['deep','DeepSeek - Into the'],['gshield','Compute Engine'],['gmail','GPT Engineer Chat'],['drib','Browse thousands'],['','Databutton - The AI'],['db','Databutton | Pro'],['db','Databutton'],['db','Databutton'],['anth','Anthropic Console'],['goog','curl -X POST https'],['hexg','Firebase Payments']],
    url: ['<span>https://console.cloud.</span><span class="text-[#fbfbfe]">google.com</span><span>/appengine/start/create?invt=AbubHA&amp;project=go-make-ai</span>', 589]
  },
  right: {
    title: ['Code Bot - GPT Engineer UI Setup — Mozilla Firefox', 320, 'text-[#8c8c8c]'],
    tabs: [],
    url: ['<span>https://</span><span class="text-[#fbfbfe]">chatgpt.com</span><span>/g/g-67f5c7793c388191b3b1aaf14d166c04-code-bot/c/67f80317-098c-800f-8e34-c7a45f8e02c4</span>', 736]
  }
};
document.querySelectorAll('[data-chrome]').forEach(el => {
  const side = el.dataset.chrome, d = winData[side], L = side === 'left';
  const tabs = L ? d.tabs.map(([ic, t], i) => `
      <div class="relative w-[146px] mr-[3.700px] h-9 shrink-0 rounded flex items-center pl-2 ${i ? '' : 'bg-[#555] shadow-[0_0_3px_rgba(0,0,0,0.5)] text-[#7b9be8]'}">
        ${ic ? icon(ic) : ''}
        <div class="${ic ? 'ml-[6px] w-[93px]' : 'w-[114px]'} overflow-hidden whitespace-nowrap text-[13px] text-[#efefef] ${t === 'Databutton' ? '' : '[mask-image:linear-gradient(to_right,black_80%,transparent)]'}">${t === 'Databutton' ? '<span data-w="70">Databutton</span>' : '<span class="tracking-[-0.350px]">' + t + '</span>'}</div>
        <svg class="absolute right-[11px] top-[12px] w-3 h-3 text-[#efefef]" viewBox="0 0 16 16"><use href="#x"/></svg>
      </div>`).join('') : `
      <div class="relative w-[221px] h-9 rounded flex items-center pl-2 bg-[#555] shadow-[0_0_3px_rgba(0,0,0,0.5)]">${icon('oaitab')}
        <div class="ml-[6px] w-[164px] overflow-hidden whitespace-nowrap text-[13px]"><span data-w="163">Code Bot - GPT Engineer UI</span></div>
        <svg class="absolute right-[10px] top-[12px] w-3 h-3" viewBox="0 0 16 16"><use href="#x"/></svg>
      </div>`;
  el.innerHTML = `
  <div class="h-[172px] bg-[#2b2b2b] text-[#efefef] flex flex-col border-t border-[#3c3c3c]">
    <div class="h-[32px] relative flex items-center justify-center text-[12.500px] font-semibold ${d.title[2]}">
      <span data-w="${d.title[1]}">${d.title[0]}</span>
      <div class="absolute right-[8px] top-0 h-[30px] flex items-center">
        <svg class="w-3 h-3" viewBox="0 0 12 12"><path d="M2 10h8" stroke="currentColor" stroke-width="1.300"/></svg>
        <svg class="ml-[16px] w-3 h-3" viewBox="0 0 12 12" fill="none" stroke="currentColor">${L ? '<path d="M1.500 3.500h6v7h-6zM3.500 1.500h7v8"/>' : '<path d="M2.500 2.500h7v7h-7z"/>'}</svg>
        <div class="ml-[13px] w-[18px] h-[18px] rounded-full ${L ? 'bg-[#8c5bd9]' : 'bg-[#606060]'} flex items-center justify-center"><svg class="w-[10px] h-[10px]" viewBox="0 0 10 10"><path d="M1.500 1.500l7 7M8.500 1.500l-7 7" stroke="#fff" stroke-width="2.200"/></svg></div>
      </div>
    </div>
    <div class="h-[25px] pl-[7px] flex items-center text-[13px]">${menus.map(([m, w, a]) => { const k = menuMark[m] || 0; return `<div style="${px(a)}"><span data-w="${w}">${m.slice(0, k)}<u class="underline underline-offset-[3px]">${m[k]}</u>${m.slice(k + 1)}</span></div>`; }).join('')}</div>
    <div class="h-[45px] flex items-center">
      <div class="w-[42px] h-full border-r border-[#484848] pl-[12px] flex items-center">${icon('hist')}</div>
      <div class="ml-1 pl-[1px] flex items-center">${tabs}</div>
      <svg class="${L ? 'ml-[5px]' : 'ml-[15px]'} w-[13px] h-[13px]" viewBox="0 0 16 16"><use href="#plus"/></svg>
      <svg class="ml-auto mr-[13px] w-[14px] h-[14px]" viewBox="0 0 16 16"><use href="#chev"/></svg>
    </div>
    <div class="h-[41px] bg-[#555] flex items-center text-[#efefef]">
      ${icon('back','w-4 h-4 ml-4')}${icon('fwd','w-4 h-4 ml-5 text-[#8b8b8b]')}${icon('reload','w-4 h-4 ml-5')}
      <div class="ml-[127px] w-[1206px] h-8 rounded bg-[#3a3a3a] flex items-center pl-2">
        ${icon('shield')}${icon('lock','w-4 h-4 ml-3')}${icon('perm','w-4 h-4 ml-3')}
        <span data-w="${d.url[1]}" class="ml-[10px] text-[14.500px] text-[#a0a0a0] whitespace-nowrap">${d.url[0]}</span>
        ${L ? '<span class="ml-auto w-9 h-5 rounded-sm bg-[#555] text-[11.500px] leading-5 text-center">90%</span>' : icon('reader','w-4 h-4 ml-auto mr-[0px]')}
        ${icon('star','w-4 h-4 ml-3 mr-2')}
      </div>
      ${icon('gear','w-4 h-4 ml-[15px]')}${icon('wrench','w-4 h-4 ml-5')}${icon('snip','w-4 h-4 ml-5')}${icon('mask','w-4 h-4 ml-5')}${icon('fup','w-4 h-4 ml-5')}${icon('fdn','w-4 h-4 ml-5')}
      ${icon('pocket','w-4 h-4 ml-[132px]')}${icon('acct','w-4 h-4 ml-5')}${icon('ext','w-4 h-4 ml-5')}${icon('menu','w-4 h-4 ml-5')}
    </div>
    <div class="h-[28px] bg-[#555] flex items-center pl-3 text-[13px] border-b border-[#3a3a3a]">
      ${bookmarks.map(([ic, t, w, a]) => `<div class="flex items-center shrink-0 whitespace-nowrap" style="${px(a)}">${special[ic] || icon(ic)}${t ? `<span data-w="${w}" class="ml-1">${t}</span>` : ''}</div>`).join('')}
      <svg class="ml-auto mr-[13px] w-[14px] h-[14px]" viewBox="0 0 14 14" fill="none" stroke="currentColor" stroke-width="1.300"><path d="M2 1.500L7 7l-5 5.500M7.500 1.500l5 5.500-5 5.500"/></svg>
    </div>
  </div>`;
});

/* ---------- console navigation ---------- */
document.getElementById('nav').innerHTML = [['dash','Dashboard',61],['serv','Services',48],['vers','Versions',50],['inst','Instances',55],['task','Task queues',72],['cron','Cron jobs',54],['fire','Firewall rules',75],['quot','Quotas',41],['mem','Memcache',63],['find','Search',39],['set','Settings',46]]
  .map(([ic, t, w], i) => `<div class="h-[32.300px] flex items-center text-[12.6px] ${i ? 'pl-[21px] text-[#202124]' : 'pl-[18px] border-l-[3px] border-[#1967d2] bg-[#e8f0fe] text-[#1967d2]'}">
    <span class="${i ? 'text-[#5f6368]' : ''}">${icon('n-' + ic, 'w-[15px] h-[15px]')}</span><span data-w="${w}" class="ml-[21px]">${t}</span></div>`).join('');

/* ---------- map markers ---------- */
document.getElementById('pins').innerHTML = [[681,290],[697,296],[760,288],[712,304],[217,326],[252,350],[242,374],[398,326],[385,362],[230,382],[317,370,1],[373,388],[1167,366],[1218,378],[1198,380],[1142,430],[1117,434],[961,446],[1078,518],[1090,546],[502,615]]
  .map(([x, y, p]) => `<use href="#pin" x="${x - 40}" y="${y - 120}" width="80" height="140" color="${p ? '#8e44ad' : '#5a8fdc'}"/>`).join('');

/* ---------- tutorial list ---------- */
document.getElementById('docs').innerHTML = [
  [[['Set up your development',142],['environment',71]], [['Set up your local environment for',166],['developing and deploying your App Engine',212],['services.',44]]],
  [[['Setting up access control',145]], [['Permissions to access services and',180],['resources in your project.',127]]],
  [[['Communicating between your',171],['services',47]], [['Various methods to communicate',170],['between your App Engine services or with',209],['other services, including Google Cloud',192],['services and external applications.',174]]],
  [[['How instances are managed',163]], [['Learn the different App Engine scaling',191],['types.',30]]],
  [[['How requests are handled',149]], [['Explains how your App Engine application',209],['receives requests and sends responses.',201]]],
  [[['Testing and deploying your',154],['application',63]], [['Learn how to run your application locally,',205],['deploy it, and test on App Engine.',167]]],
  [[['REST API reference',111]], [['REST API reference for App Engine',170]]]
].map(([ts, ds]) => `<div class="w-[241px] pt-[17px] pb-[10px] border-b border-[#e3e5e8] flex">
    <span class="mt-[2px] ml-0.5 text-[#6f7377]">${icon('doc','w-[14px] h-[14px]')}</span>
    <div class="ml-[9px] whitespace-nowrap">
      ${ts.map(([t, w], i) => `<div class="h-[18px] leading-[18px] text-[12.6px] text-[#1a73e8] flex"><span data-w="${w}">${t}</span>${i === ts.length - 1 ? '<svg class="ml-[5px] mt-[2px] w-[9px] h-[9px]" viewBox="0 0 12 12"><use href="#pop"/></svg>' : ''}</div>`).join('')}
      <div class="mt-[7.500px] w-[97px] h-[19.500px] rounded-full bg-[#f1f3f4] text-[#5f6368] text-[10.800px] leading-[19px] text-center"><span data-w="77">Help document</span></div>
      <div class="mt-[6.500px] text-[10.800px] leading-[14.500px] text-[#3c4043]">${ds.map(([t, w]) => `<div><span data-w="${w}">${t}</span></div>`).join('')}</div>
    </div></div>`).join('');

/* ---------- assistant sidebar ---------- */
const av = {
  gpt: '<div class="w-6 h-6 rounded-full border border-[#4a4a4a] flex items-center justify-center"><svg class="w-4 h-4" viewBox="0 0 24 24"><use href="#oai"/></svg></div>',
  sora: '<div class="w-6 h-6 rounded-full bg-gradient-to-br from-[#3a4f9c] via-[#6f8fce] to-[#8a86b8]"></div>',
  cre: '<svg class="w-6 h-6 rounded-full" viewBox="0 0 24 24"><rect width="24" height="24" fill="#9a9a9a"/><path d="M8 11c-1-9 9-9 8 0l2 13H6z" fill="#1c1c1c"/><circle cx="12" cy="6.500" r="2.300" fill="#ddd"/><path d="M3 11h18v4H3z" fill="#333"/><path d="M9 16h6v8H9z" fill="#c9c9c9"/></svg>',
  song: '<svg class="w-6 h-6 rounded-full" viewBox="0 0 24 24"><rect width="24" height="24" fill="#2a2a7a"/><rect width="9" height="24" fill="#7a2a9a"/><path d="M14 18h10v6H4z" fill="#124a8c"/><path d="M9.500 16V7l8-2v9" fill="none" stroke="#7fd6ff" stroke-width="1.800"/><circle cx="8" cy="16" r="2" fill="#8fe0ff"/><circle cx="16" cy="14" r="2" fill="#8fe0ff"/></svg>',
  big: '<svg class="w-6 h-6 rounded-full" viewBox="0 0 24 24"><rect width="24" height="24" fill="#d5e2e6"/><path d="M9 20V7l6-3v16zM4 20v-7h3v7zM17 20V8h3v12z" fill="#7393a3"/><path d="M2 10l5-4 4 2 8-6" stroke="#4d6b7c" fill="none"/></svg>',
  bot: '<div class="w-6 h-6 rounded-full border border-[#4a4a4a] flex items-center justify-center"><svg class="w-[15px] h-[15px]" viewBox="0 0 16 16" fill="none" stroke="#b4b4b4" stroke-width="1.200"><path d="M8 1.500l5.800 3.200v6.600L8 14.500l-5.800-3.200V4.700zM2.200 4.700L8 8l5.800-3.300M8 8v6.500"/></svg></div>',
  suno: '<svg class="w-6 h-6 rounded-full" viewBox="0 0 24 24"><rect width="24" height="24" fill="#4a4a4e"/><path d="M0 8L12 0M0 14L14 4M10 14L22 4M12 20L24 10" stroke="#1d1d20" stroke-width="1.600"/><path d="M2 14c4-6 8 2 12-4M4 19h10" stroke="#4fb6b6" stroke-width="1.500" fill="none"/><path d="M8 8l5-3M14 12l6-5M16 17l6-4" stroke="#c05070" stroke-width="1.400"/></svg>',
  grid: '<svg class="w-6 h-6" viewBox="0 0 24 24" fill="none" stroke="#ececec" stroke-width="1.600"><circle cx="7.800" cy="7.800" r="2.500"/><circle cx="16.200" cy="7.800" r="2.500"/><circle cx="7.800" cy="16.200" r="2.500"/><circle cx="16.200" cy="16.200" r="2.500"/></svg>',
  fold: '<span class="w-6 flex justify-center"><svg class="w-5 h-5" viewBox="0 0 20 20"><use href="#folder"/></svg></span>'
};
const row = ([a, t, w]) => `<div class="h-9 pl-5 flex items-center text-[13.500px]">${av[a]}<span data-w="${w}" class="ml-[10px]">${t}</span></div>`;
document.getElementById('gpts').innerHTML = [['gpt','ChatGPT',55],['sora','Sora',28],['cre','Commercial Real Estat…',155],['song','Songify',48],['big','Big Data AI Commerci…',151],['bot','Code Bot',59]].map(row).join('');
document.getElementById('gpts2').innerHTML = [['suno','Suno Frontiers',92],['grid','Explore GPTs',83]].map(row).join('');
document.getElementById('projects').innerHTML = [['fold','90 Day Blue Print',109],['fold','Muskoka Potential Buyer…',171],['fold','Muskoka Project',105],['fold','Sora',28]].map(row).join('');
document.getElementById('chats').innerHTML = [['Catchy Chat Summary',138],['GPT Engineer UI Setup',143],['Font Style Enhancement',154],['GPT Engineer Setup Guide',166],['Buyer Agreement Clauses',163]]
  .map(([t, w], i) => `<div class="mx-3 h-9 pl-2 rounded-lg flex items-center text-[13.500px] ${i === 1 ? 'bg-[#2f2f2f]' : ''}"><span data-w="${w}">${t}</span></div>`).join('');

/* ---------- set each label to its advance width ---------- */
function fitLabels() {
  document.querySelectorAll('[data-w]').forEach(el => {
    el.style.whiteSpace = 'nowrap';
    el.style.letterSpacing = '0px';
    const r = document.createRange();
    r.selectNodeContents(el);
    const n = [...el.textContent].length;
    el.style.letterSpacing = ((+el.dataset.w - r.getBoundingClientRect().width) / n).toFixed(3) + 'px';
  });
}
fitLabels();
addEventListener('load', () => {
  fitLabels();
  document.fonts.ready.then(fitLabels);
  [50, 200, 500].forEach(t => setTimeout(fitLabels, t));
});
</script>
</body>
</html>
